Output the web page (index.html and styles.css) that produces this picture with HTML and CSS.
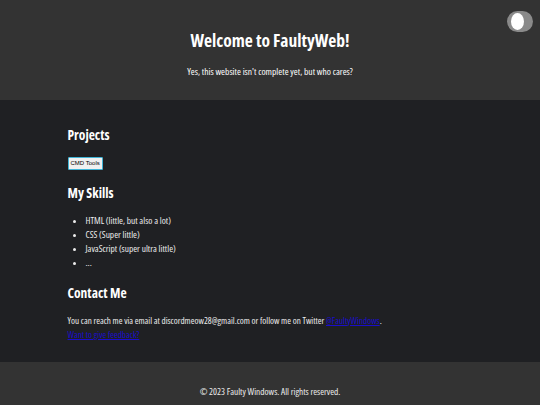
FILE: index.html
```html
<!DOCTYPE html>
<html lang="en">
<head>
<meta charset="utf-8">
<title>FaultyWeb</title>
<link rel="stylesheet" href="styles.css">
</head>
<body>
<header class="site-header">
  <h1 class="title">Welcome to FaultyWeb!</h1>
  <p class="subtitle">Yes, this website isn't complete yet, but who cares?</p>
  <div class="toggle"><span class="knob"></span></div>
</header>
<main class="content">
  <section class="block">
    <h2 class="heading">Projects</h2>
    <button class="project-btn">CMD Tools</button>
  </section>
  <section class="block">
    <h2 class="heading">My Skills</h2>
    <ul class="skills">
      <li>HTML (little, but also a lot)</li>
      <li>CSS (Super little)</li>
      <li>JavaScript (super ultra little)</li>
      <li>...</li>
    </ul>
  </section>
  <section class="block">
    <h2 class="heading">Contact Me</h2>
    <p class="contact">You can reach me via email at discordmeow28@gmail.com or follow me on Twitter <a href="#" class="link">@FaultyWindows</a>.<br><a href="#" class="link">Want to give feedback?</a></p>
  </section>
</main>
<footer class="site-footer">
  <p class="copy">© 2023 Faulty Windows. All rights reserved.</p>
</footer>
</body>
</html>
```
FILE: styles.css
```css
html, body {
  margin: 0;
  padding: 0;
}
body {
  background: #1f2023;
  color: #ffffff;
  font-family: "Comic Sans MS", "Open Sans", sans-serif;
  font-stretch: 75%;
  width: 540px;
  height: 405px;
  overflow: hidden;
}
.site-header {
  position: relative;
  background: #333333;
  height: 100px;
  box-sizing: border-box;
  padding-top: 28px;
  text-align: center;
}
.title {
  margin: 0;
  font-size: 17.5px;
  line-height: 24px;
  font-weight: bold;
}
.subtitle {
  margin: 14px 0 0;
  font-size: 9.5px;
  line-height: 12px;
}
.toggle {
  position: absolute;
  top: 11px;
  right: 7px;
  width: 26px;
  height: 21px;
  border-radius: 11px;
  background: #8a8a8a;
}
.knob {
  position: absolute;
  left: 4px;
  top: 2px;
  width: 13px;
  height: 17px;
  border-radius: 50%;
  background: #ffffff;
}
.content {
  height: 262px;
  box-sizing: border-box;
  width: 75%;
  margin: 0 auto;
  padding-top: 25px;
}
.block + .block {
  margin-top: 13px;
}
.heading {
  margin: 0;
  font-size: 13.5px;
  line-height: 20px;
  font-weight: bold;
}
.project-btn {
  display: block;
  margin-top: 12px;
  height: 13px;
  padding: 0 2px;
  font-family: "Liberation Sans", Arial, sans-serif;
  font-stretch: normal;
  font-size: 6px;
  line-height: 11px;
  background: #f0f0f0;
  color: #000;
  border: 1px solid #3fb4d6;
  border-radius: 1px;
}
.skills {
  margin: 11px 0 0;
  padding-left: 18px;
  font-size: 9.4px;
  line-height: 14px;
  color: #ececec;
}
.contact {
  margin: 11px 0 0;
  font-size: 9.1px;
  line-height: 14px;
  color: #ececec;
}
.link {
  color: #1a0dcc;
}
.site-footer {
  background: #333333;
  height: 43px;
  box-sizing: border-box;
  padding-top: 24px;
  text-align: center;
}
.copy {
  margin: 0;
  font-size: 9.3px;
  line-height: 12px;
  color: #ececec;
}
```
